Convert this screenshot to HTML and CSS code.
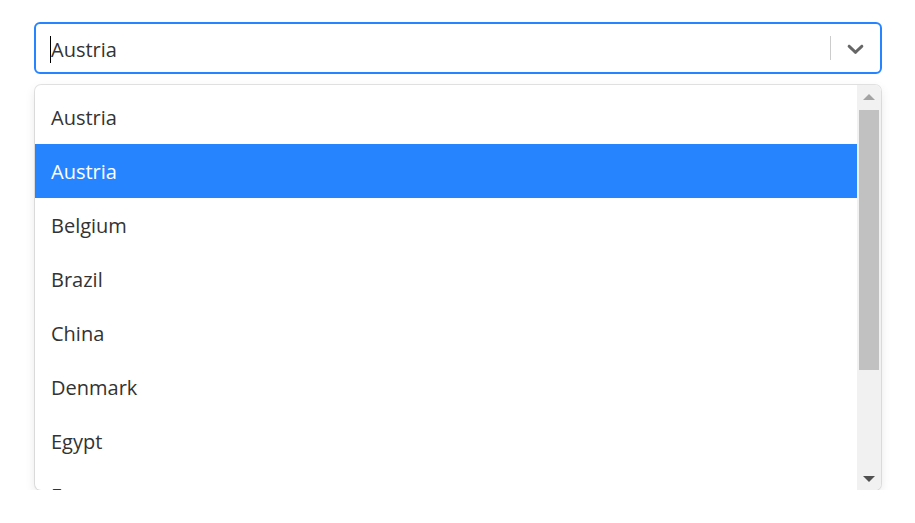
FILE: index.html
```html
<!DOCTYPE html>
<html>
<head>
<meta charset="utf-8">
<link rel="stylesheet" href="styles.css">
</head>
<body>
<div class="select">
  <div class="control">
    <div class="value"><span class="caret"></span>Austria</div>
    <div class="indicators">
      <span class="sep"></span>
      <span class="dropdown">
        <svg viewBox="0 0 20 20" width="27" height="27" aria-hidden="true"><path d="M4.516 7.548c0.436-0.446 1.043-0.481 1.576 0l3.908 3.747 3.908-3.747c0.533-0.481 1.141-0.446 1.574 0 0.436 0.445 0.408 1.197 0 1.615-0.406 0.418-4.695 4.502-4.695 4.502-0.217 0.223-0.502 0.335-0.787 0.335s-0.57-0.112-0.789-0.335c0 0-4.287-4.084-4.695-4.502s-0.436-1.17 0-1.615z" fill="currentColor"/></svg>
      </span>
    </div>
  </div>
  <div class="menu">
    <div class="list">
      <div class="option">Austria</div>
      <div class="option focused">Austria</div>
      <div class="option">Belgium</div>
      <div class="option">Brazil</div>
      <div class="option">China</div>
      <div class="option">Denmark</div>
      <div class="option">Egypt</div>
      <div class="option">France</div>
    </div>
    <div class="scrollbar">
      <div class="btn up"><span class="tri-up"></span></div>
      <div class="thumb"></div>
      <div class="spacer"></div>
      <div class="btn down"><span class="tri-down"></span></div>
    </div>
  </div>
</div>
</body>
</html>
```

FILE: styles.css
```css
html, body {
  margin: 0;
  padding: 0;
  background: #fff;
}
body {
  font-family: "Open Sans", "Noto Sans", sans-serif;
  font-size: 20px;
  color: #333;
}
.select {
  padding: 22px 33px 0 34px;
}
.control {
  height: 52px;
  box-sizing: border-box;
  border: 2px solid #2684ff;
  border-radius: 6px;
  display: flex;
  align-items: center;
  background: #fff;
}
.value {
  flex: 1;
  padding-left: 14px;
  padding-top: 4px;
  display: flex;
  align-items: center;
  line-height: 28px;
  color: #333;
}
.caret {
  width: 1px;
  height: 27px;
  background: #000;
  margin-top: -2px;
}
.indicators {
  display: flex;
  align-items: center;
  align-self: stretch;
}
.sep {
  width: 1px;
  align-self: stretch;
  margin: 12px 0;
  background: #ccc;
}
.dropdown {
  display: flex;
  padding: 0 11px;
  color: #666;
}
.menu {
  margin: 11px 1px 0;
  height: 405px;
  border-radius: 6px;
  box-shadow: 0 0 0 1px rgba(0,0,0,0.1), 0 4px 11px rgba(0,0,0,0.1);
  display: flex;
  overflow: hidden;
  background: #fff;
}
.list {
  flex: 1;
  padding-top: 5px;
  overflow: hidden;
}
.option {
  height: 54px;
  box-sizing: border-box;
  padding: 2px 16px 0;
  line-height: 52px;
  color: #333;
}
.option.focused {
  background: #2684ff;
  color: #fff;
}
.scrollbar {
  width: 24px;
  background: #f1f1f1;
  display: flex;
  flex-direction: column;
}
.btn {
  height: 23px;
  display: flex;
  align-items: center;
  justify-content: center;
}
.tri-up {
  width: 0;
  height: 0;
  border-left: 6px solid transparent;
  border-right: 6px solid transparent;
  border-bottom: 6px solid #a3a3a3;
}
.tri-down {
  width: 0;
  height: 0;
  border-left: 6px solid transparent;
  border-right: 6px solid transparent;
  border-top: 6px solid #505050;
}
.thumb {
  height: 260px;
  margin: 2px 2px 0;
  background: #c1c1c1;
}
.spacer {
  flex: 1;
}
```
